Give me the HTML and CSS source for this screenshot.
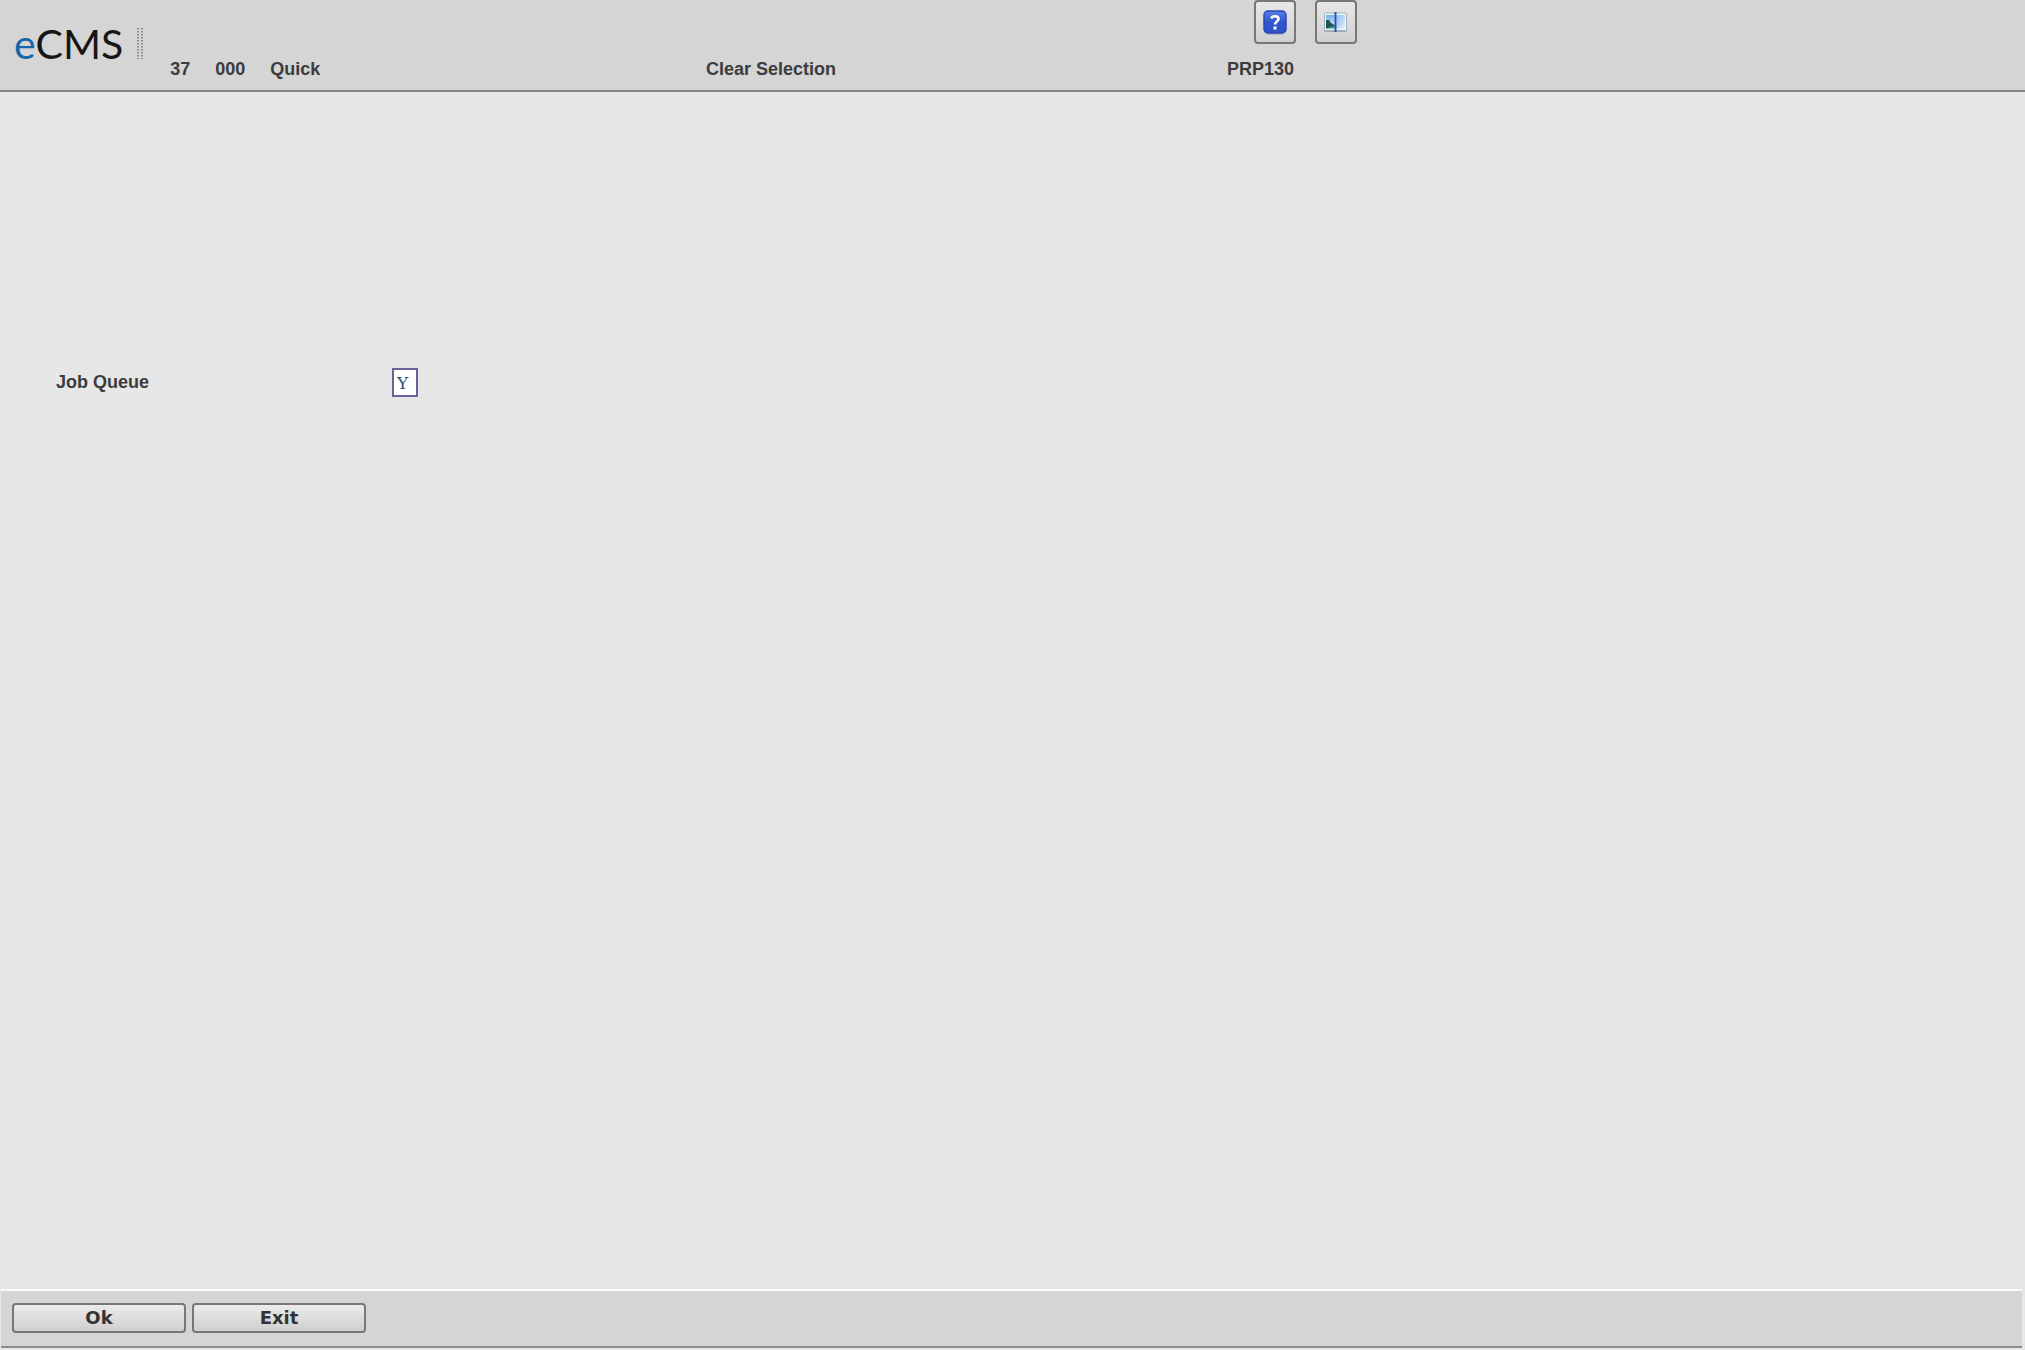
FILE: index.html
```html
<!DOCTYPE html>
<html lang="en">
<head>
<meta charset="utf-8">
<title>eCMS - Clear Selection</title>
<link rel="stylesheet" href="styles.css">
</head>
<body>
<form class="screen">
  <header class="header">
    <div class="identity">
      <div class="logo"><span class="logo-accent">e</span>CMS</div>
      <svg class="grip" width="6" height="31" viewBox="0 0 6 31" aria-hidden="true">
        <path d="M1 0V31M5 0V31" stroke="#8c8c8c" stroke-width="2" stroke-dasharray="1.6 1.4"/>
      </svg>
      <div class="codes"><span>37</span><span>000</span><span>Quick</span></div>
    </div>
    <h1 class="title">Clear Selection</h1>
    <div class="program">
      <div class="tools">
        <button type="button" class="tool" aria-label="Help">
          <svg width="24" height="26" viewBox="0 0 24 26" aria-hidden="true">
            <defs>
              <linearGradient id="blue" x1="0" y1="0" x2="0" y2="1"><stop offset="0" stop-color="#5a80e6"/><stop offset=".5" stop-color="#3157cc"/><stop offset="1" stop-color="#2f50cc"/></linearGradient>
            </defs>
            <rect x="1" y="2" width="22" height="23" rx="5" fill="#999" opacity=".5"/>
            <rect x="1" y="1" width="22" height="22" rx="4" fill="url(#blue)" stroke="#2c48b8" stroke-width="1.5"/>
            <path d="M8.5 8.5C9 5.5 15.5 5.5 15.5 9C15.5 11.5 12 11.5 12 14.5" fill="none" stroke="#fff" stroke-width="2.6"/>
            <rect x="10.5" y="16.5" width="3" height="3" fill="#fff"/>
          </svg>
        </button>
        <button type="button" class="tool" aria-label="Split view">
          <svg width="24" height="26" viewBox="0 0 24 26" aria-hidden="true">
            <defs>
              <linearGradient id="sky" x1="0" y1="0" x2="0" y2="1"><stop offset="0" stop-color="#73aee6"/><stop offset="1" stop-color="#e0f4fb"/></linearGradient>
              <linearGradient id="pale" x1="0" y1="0" x2="1" y2="1"><stop offset="0" stop-color="#8cbbf0"/><stop offset="1" stop-color="#e2eefb"/></linearGradient>
            </defs>
            <rect x="0" y="4" width="23" height="18" rx="1" fill="#a3abae"/>
            <rect x="0.5" y="3" width="22" height="17.5" rx="1" fill="#f0f8f8" stroke="#9fb2ba"/>
            <rect x="2" y="5" width="8.5" height="13.5" fill="url(#sky)"/>
            <path d="M2 10L5 10L7 13L10.5 15V17L2 18.5Z" fill="#1d5557"/>
            <path d="M2 18.5L10.5 15V18.5Z" fill="#3c8b8a"/>
            <rect x="12.5" y="5" width="8.5" height="13.5" fill="url(#pale)"/>
            <path d="M11.5 2V22" stroke="#2450bd" stroke-width="2"/>
          </svg>
        </button>
      </div>
      <div class="program-id">PRP130</div>
    </div>
  </header>
  <main class="content">
    <div class="field">
      <label class="field-label" for="job-queue">Job Queue</label>
      <input class="field-input" id="job-queue" type="text" maxlength="1" value="Y">
    </div>
  </main>
  <footer class="footer">
    <button type="button" class="action">Ok</button>
    <button type="button" class="action">Exit</button>
  </footer>
</form>
</body>
</html>
```
FILE: styles.css
```css
* { box-sizing: border-box; }

body {
  margin: 0;
  background: #e7e7e7;
  color: #3c3c3e;
  font: bold 18px/24px "Liberation Sans", Arial, sans-serif;
}

.screen {
  display: flex;
  flex-direction: column;
  min-height: 100vh;
  padding-bottom: 2px;
}

.header {
  display: grid;
  grid-template-columns: 706fr 521fr 798fr;
  align-items: end;
  padding-bottom: 9px;
  background: #d5d5d5;
  border-bottom: 2px solid #858585;
}

.identity {
  display: flex;
  align-items: end;
  padding-left: 14px;
}

.logo {
  padding-bottom: 11px;
  color: #161616;
  font: 41px/52px Lato, sans-serif;
}

.logo-accent { color: #1467a8; }

.grip {
  margin: 0 27px 22px 14px;
}

.codes {
  display: flex;
  gap: 25px;
}

.title {
  margin: 0;
  font-size: 18px;
}

.tools {
  display: flex;
  gap: 19px;
  padding-left: 27px;
  margin-bottom: 13px;
}

.tool {
  display: grid;
  place-items: center;
  width: 42px;
  height: 44px;
  padding: 2px 0 0;
  border: 2px solid #777;
  border-radius: 4px;
  background: linear-gradient(#e8e8e8, #d0d0d0);
}

.content {
  flex: 1;
  padding: 276px 56px 0;
}

.field {
  display: flex;
  align-items: center;
}

.field-label {
  width: 336px;
  padding-bottom: 2px;
}

.field-input {
  width: 26px;
  height: 29px;
  padding: 0 3px;
  border: 2px solid #66629a;
  background: #fff;
  color: #2c5080;
  font: 17px/24px "DejaVu Serif", "Courier New", serif;
}

.footer {
  display: flex;
  gap: 6px;
  margin: 0 3px 0 1px;
  padding: 12px 11px 13px;
  background: #d5d5d5;
  border-top: 2px solid #fbfbfb;
  border-bottom: 2px solid #8c8c8c;
}

.action {
  width: 174px;
  height: 30px;
  padding: 0;
  border: 2px solid #777;
  border-radius: 4px;
  background: linear-gradient(#ebebeb, #cfcfcf);
  color: #333;
  font: bold 18px/24px "DejaVu Sans", Verdana, sans-serif;
}
```
